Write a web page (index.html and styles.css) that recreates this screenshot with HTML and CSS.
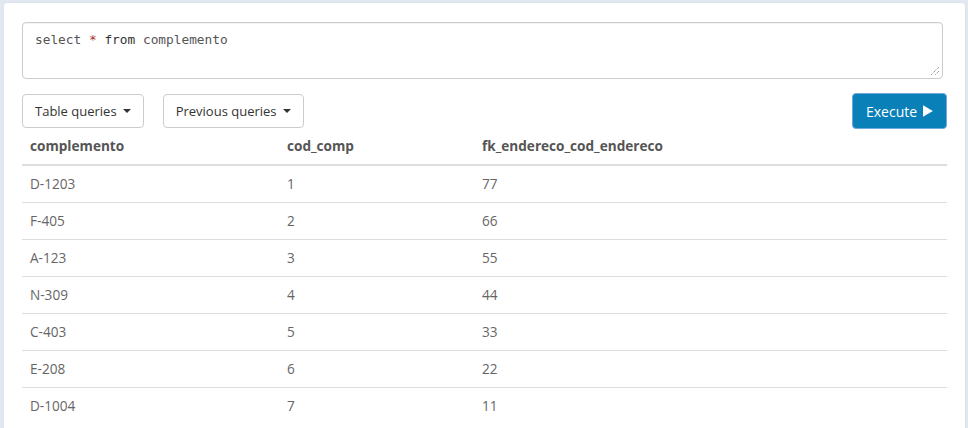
FILE: index.html
```html
<!DOCTYPE html>
<html>
<head>
<meta charset="utf-8">
<link rel="stylesheet" href="styles.css">
</head>
<body>
<div class="panel">
  <div class="editor">
    <div class="code"><span class="kw">select</span> <span class="op">*</span> <span class="kw2">from</span> <span class="id">complemento</span></div>
    <svg class="grip" width="10" height="10" viewBox="0 0 10 10"><path d="M9 1 L1 9 M9 5 L5 9" stroke="#777" stroke-width="1" stroke-dasharray="1 1" fill="none"/></svg>
  </div>
  <div class="toolbar">
    <div class="left">
      <button class="btn">Table queries <span class="caret"></span></button>
      <button class="btn">Previous queries <span class="caret"></span></button>
    </div>
    <button class="btn btn-primary">Execute <svg class="play" width="12" height="14" viewBox="0 0 12 14"><path d="M0 0 L12 7 L0 14 Z" fill="#fff"/></svg></button>
  </div>
  <table class="table">
    <thead>
      <tr><th class="c1">complemento</th><th class="c2">cod_comp</th><th>fk_endereco_cod_endereco</th></tr>
    </thead>
    <tbody>
      <tr><td>D-1203</td><td>1</td><td>77</td></tr>
      <tr><td>F-405</td><td>2</td><td>66</td></tr>
      <tr><td>A-123</td><td>3</td><td>55</td></tr>
      <tr><td>N-309</td><td>4</td><td>44</td></tr>
      <tr><td>C-403</td><td>5</td><td>33</td></tr>
      <tr><td>E-208</td><td>6</td><td>22</td></tr>
      <tr><td>D-1004</td><td>7</td><td>11</td></tr>
    </tbody>
  </table>
</div>
</body>
</html>
```
FILE: styles.css
```css
* { box-sizing: border-box; }
html, body { margin: 0; padding: 0; }
body {
  background: #e2e8ef;
  font-family: "Open Sans", "Noto Sans", sans-serif;
  font-size: 13.6px;
  color: #555;
  height: 428px;
  overflow: hidden;
}
.panel {
  margin: 2px 2px 0 3px;
  background: #fff;
  border: 1px solid #dde3ea;
  border-radius: 4px;
  padding: 19px 18px 20px 18px;
  height: 440px;
}
.editor {
  position: relative;
  width: 921px;
  height: 57px;
  border: 1px solid #ccc;
  border-radius: 4px;
  padding: 7px 12px;
  box-shadow: inset 0 1px 1px rgba(0,0,0,0.05);
}
.code {
  font-family: "DejaVu Sans Mono", "Liberation Mono", monospace;
  font-size: 12.8px;
  line-height: 20px;
  color: #555;
}
.code .op { color: #a33; }
.code .kw2 { color: #333; }
.grip { position: absolute; right: 2px; bottom: 2px; }
.toolbar {
  display: flex;
  justify-content: space-between;
  align-items: flex-start;
  margin-top: 14px;
  height: 35px;
}
.left { display: flex; gap: 19px; margin-top: 1px; }
.btn {
  font-family: inherit;
  font-size: 13px;
  color: #333;
  background: #fff;
  border: 1px solid #ccc;
  border-radius: 4px;
  height: 34px;
  padding: 0 12px;
  display: inline-flex;
  align-items: center;
  gap: 6px;
}
.caret {
  display: inline-block;
  width: 0; height: 0;
  border-top: 4px solid #333;
  border-left: 4px solid transparent;
  border-right: 4px solid transparent;
}
.btn-primary {
  background: #0a80b8;
  border-color: #6ea8dc;
  color: #fff;
  height: 36px;
  width: 95px;
  padding: 0 13px;
  font-size: 14px;
  gap: 5px;
  flex-shrink: 0;
}
.play { margin-left: 1px; }
.table {
  width: 925px;
  border-collapse: collapse;
  border-spacing: 0;
}
.table th, .table td {
  text-align: left;
  padding: 8px;
  line-height: 20px;
}
.table th {
  font-weight: 700;
  color: #555;
  border-bottom: 2px solid #ddd;
}
.table td { border-top: 1px solid #ddd; color: #666; }
.table .c1 { width: 257px; }
.table .c2 { width: 195px; }
```
